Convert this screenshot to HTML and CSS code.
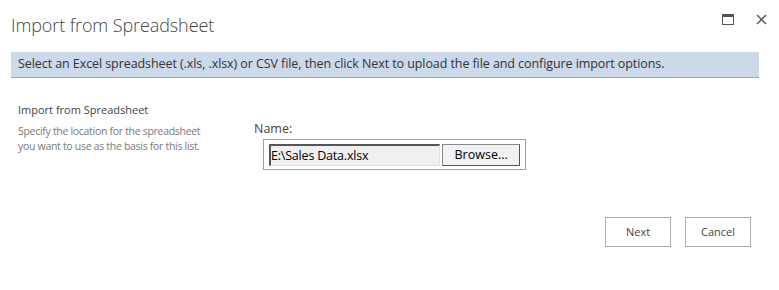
FILE: index.html
```html
<!DOCTYPE html>
<html>
<head>
<meta charset="utf-8">
<link rel="stylesheet" href="styles.css">
</head>
<body>
<div class="dialog">
  <div class="titlebar">
    <h1 class="title">Import from Spreadsheet</h1>
    <div class="controls">
      <svg class="icon" width="12" height="11" viewBox="0 0 12 11"><rect x="0.5" y="0.5" width="11" height="10" fill="none" stroke="#555"/><rect x="0" y="0" width="12" height="3" fill="#555"/></svg>
      <svg class="icon" width="11" height="11" viewBox="0 0 11 11"><path d="M1 1L10 10M10 1L1 10" stroke="#666" stroke-width="1.6" fill="none"/></svg>
    </div>
  </div>
  <div class="banner">Select an Excel spreadsheet (.xls, .xlsx) or CSV file, then click Next to upload the file and configure import options.</div>
  <div class="section">
    <div class="desc">
      <div class="sec-title">Import from Spreadsheet</div>
      <div class="sec-text">Specify the location for the spreadsheet<br>you want to use as the basis for this list.</div>
    </div>
    <div class="field">
      <div class="label">Name:</div>
      <div class="filebox">
        <div class="filename">E:\Sales Data.xlsx</div>
        <div class="browse">Browse...</div>
      </div>
    </div>
  </div>
  <div class="actions">
    <div class="btn">Next</div>
    <div class="btn">Cancel</div>
  </div>
</div>
</body>
</html>
```
FILE: styles.css
```css
html, body {
  margin: 0;
  padding: 0;
  background: #fff;
}
body {
  font-family: "Open Sans", "Noto Sans", sans-serif;
  color: #444;
}
.dialog {
  width: 779px;
  height: 290px;
  box-sizing: border-box;
  padding: 0 12px 0 11px;
}
.titlebar {
  display: flex;
  justify-content: space-between;
  align-items: flex-start;
  height: 52px;
}
.title {
  margin: 0;
  padding-top: 13px;
  font-size: 18px;
  font-weight: 300;
  color: #444;
  letter-spacing: -0.1px;
}
.controls {
  display: flex;
  gap: 22px;
  padding-top: 14px;
}
.icon { display: block; }
.banner {
  width: 748px;
  height: 26px;
  box-sizing: border-box;
  background: #ccd9e9;
  border-bottom: 1px solid #a5a5a5;
  padding-left: 7px;
  font-size: 12.5px;
  line-height: 24px;
  color: #333;
  letter-spacing: -0.08px;
}
.section {
  display: flex;
  padding-top: 24px;
  padding-left: 7px;
}
.desc {
  width: 236px;
}
.sec-title {
  font-size: 11px;
  color: #444;
  line-height: 15px;
}
.sec-text {
  margin-top: 7px;
  font-size: 10.5px;
  line-height: 15px;
  color: #7a7a7a;
  letter-spacing: -0.3px;
}
.field {
  padding-top: 19px;
}
.label {
  font-size: 12.5px;
  color: #444;
  line-height: 16px;
}
.filebox {
  margin-top: 2px;
  margin-left: 9px;
  width: 263px;
  height: 31px;
  box-sizing: border-box;
  border: 1px solid #a0a0a0;
  display: flex;
  align-items: center;
  padding: 0 5px 0 5px;
  gap: 2px;
}
.filename {
  width: 172px;
  height: 22px;
  box-sizing: border-box;
  background: #f0f0f0;
  border-top: 2px solid #555;
  border-left: 2px solid #555;
  border-right: 1px solid #e0e0e0;
  border-bottom: 1px solid #e0e0e0;
  font-size: 12.5px;
  line-height: 19px;
  color: #000;
  padding-left: 0;
  letter-spacing: -0.2px;
}
.browse {
  width: 78px;
  height: 22px;
  box-sizing: border-box;
  background: #f2f2f2;
  border: 1px solid #888;
  border-right-color: #555;
  border-bottom-color: #555;
  font-size: 12.5px;
  line-height: 20px;
  text-align: center;
  color: #000;
}
.actions {
  display: flex;
  justify-content: flex-end;
  gap: 14px;
  padding-top: 47px;
  padding-right: 16px;
}
.btn {
  width: 66px;
  height: 30px;
  box-sizing: border-box;
  border: 1px solid #ababab;
  font-size: 11px;
  line-height: 28px;
  text-align: center;
  color: #444;
}
```
